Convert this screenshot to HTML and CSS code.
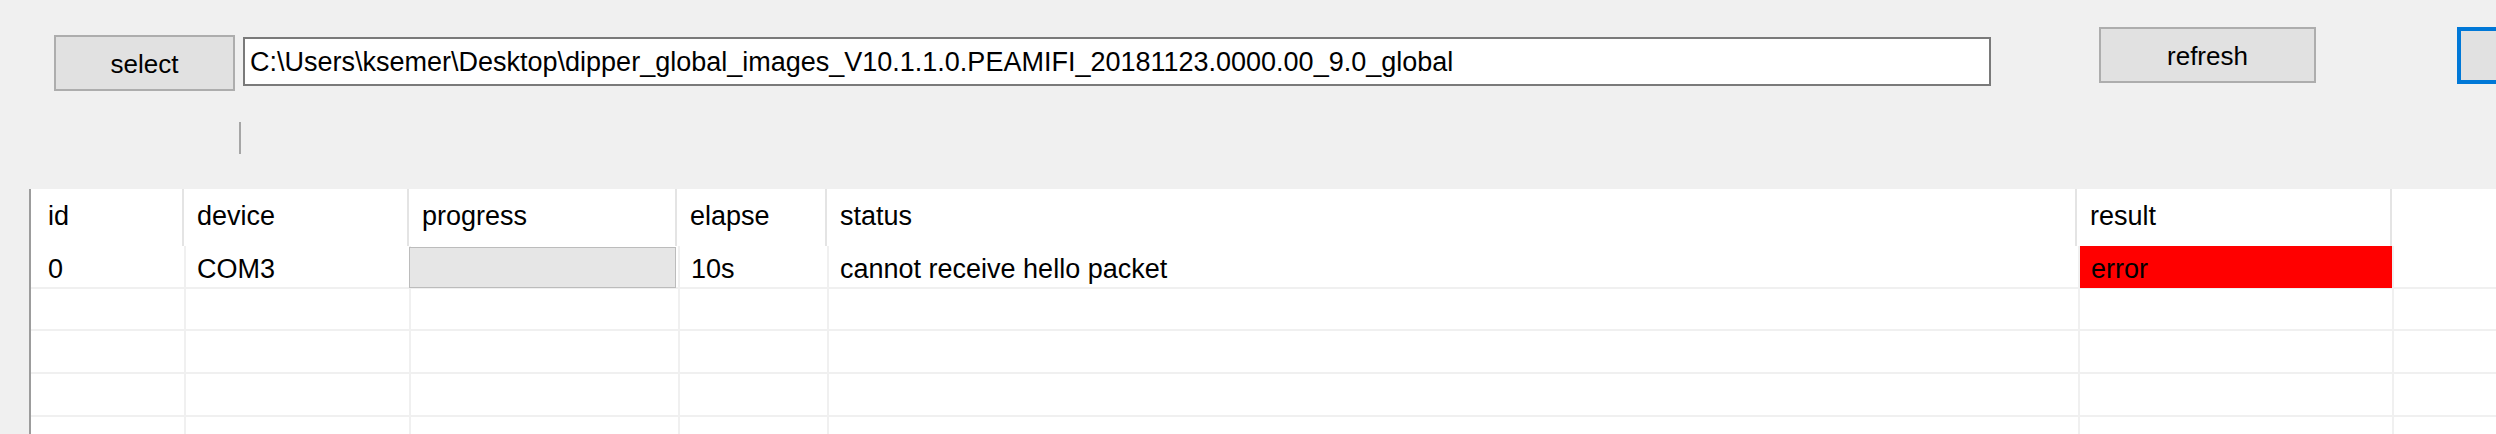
FILE: index.html
```html
<!DOCTYPE html>
<html>
<head>
<meta charset="utf-8">
<title>flash tool</title>
<link rel="stylesheet" href="styles.css">
</head>
<body>
<div class="app">
  <div class="toolbar">
    <button class="btn btn-select">select</button>
    <div class="path">C:\Users\ksemer\Desktop\dipper_global_images_V10.1.1.0.PEAMIFI_20181123.0000.00_9.0_global</div>
    <button class="btn btn-refresh">refresh</button>
    <button class="btn btn-default"></button>
  </div>
  <div class="sepbar"><span class="vsep"></span></div>
  <div class="grid">
    <div class="hrow">
      <div class="hcell first">id</div>
      <div class="hcell">device</div>
      <div class="hcell">progress</div>
      <div class="hcell">elapse</div>
      <div class="hcell">status</div>
      <div class="hcell">result</div>
      <div class="hcell last"></div>
    </div>
    <div class="row">
      <div class="cell first">0</div>
      <div class="cell">COM3</div>
      <div class="cell progress-cell"><div class="progress"></div></div>
      <div class="cell">10s</div>
      <div class="cell">cannot receive hello packet</div>
      <div class="cell error">error</div>
      <div class="cell last"></div>
    </div>
    <div class="row">
      <div class="cell first"></div><div class="cell"></div><div class="cell"></div><div class="cell"></div><div class="cell"></div><div class="cell"></div><div class="cell last"></div>
    </div>
    <div class="row">
      <div class="cell first"></div><div class="cell"></div><div class="cell"></div><div class="cell"></div><div class="cell"></div><div class="cell"></div><div class="cell last"></div>
    </div>
    <div class="row">
      <div class="cell first"></div><div class="cell"></div><div class="cell"></div><div class="cell"></div><div class="cell"></div><div class="cell"></div><div class="cell last"></div>
    </div>
    <div class="row">
      <div class="cell first"></div><div class="cell"></div><div class="cell"></div><div class="cell"></div><div class="cell"></div><div class="cell"></div><div class="cell last"></div>
    </div>
  </div>
</div>
</body>
</html>
```
FILE: styles.css
```css
html, body {
  margin: 0;
  padding: 0;
}
body {
  background: #f0f0f0;
  font-family: "Liberation Sans", Arial, sans-serif;
  font-size: 27px;
  color: #000;
  width: 2496px;
  height: 434px;
  overflow: hidden;
}
.app {
  width: 2496px;
  height: 434px;
  overflow: hidden;
}
.toolbar {
  display: flex;
  align-items: flex-start;
  height: 122px;
  padding-left: 54px;
  box-sizing: border-box;
}
.btn {
  appearance: none;
  font-family: inherit;
  font-size: 26px;
  color: #000;
  background: #e1e1e1;
  border: 2px solid #adadad;
  box-sizing: border-box;
  padding: 3px 0 0 0;
  margin: 0;
  line-height: 31px;
  flex-shrink: 0;
}
.btn-select {
  margin-top: 35px;
  width: 181px;
  height: 56px;
}
.path {
  margin-top: 37px;
  margin-left: 8px;
  width: 1748px;
  height: 49px;
  box-sizing: border-box;
  border: 2px solid #7a7a7a;
  background: #fff;
  padding: 1px 0 0 5px;
  line-height: 31px;
  display: flex;
  align-items: center;
  white-space: nowrap;
  flex-shrink: 0;
}
.btn-refresh {
  margin-top: 27px;
  margin-left: 108px;
  width: 217px;
  height: 56px;
}
.btn-default {
  margin-top: 27px;
  margin-left: 141px;
  width: 217px;
  height: 57px;
  border: 4px solid #0078d7;
}
.sepbar {
  height: 67px;
  padding-left: 239px;
}
.vsep {
  display: block;
  width: 2px;
  height: 32px;
  background: #a6a6a6;
}
.grid {
  margin-left: 29px;
  border-left: 2px solid #9c9c9c;
  background: #fff;
  height: 245px;
  overflow: hidden;
}
.hrow {
  display: grid;
  grid-template-columns: 153px 225px 268px 150px 1250px 315px 1fr;
  height: 57px;
}
.hcell {
  box-sizing: border-box;
  border-right: 2px solid #e4e4e4;
  padding: 12px 0 0 13px;
  line-height: 31px;
  white-space: nowrap;
}
.hcell.first, .cell.first {
  padding-left: 17px;
}
.hcell.last, .cell.last {
  border-right: none;
}
.row {
  display: grid;
  grid-template-columns: 155px 225px 269px 149px 1251px 314px 1fr;
  height: 42.67px;
  box-sizing: border-box;
  border-bottom: 2px solid #f0f0f0;
}
.cell {
  box-sizing: border-box;
  border-right: 2px solid #f0f0f0;
  padding: 8px 0 0 11px;
  line-height: 31px;
  white-space: nowrap;
}
.progress-cell {
  padding: 0;
}
.progress {
  margin: 1px 0 0 -2px;
  width: 267px;
  height: 41px;
  box-sizing: border-box;
  background: #e6e6e6;
  border: 1px solid #bcbcbc;
}
.error {
  background: #ff0000;
}
```
